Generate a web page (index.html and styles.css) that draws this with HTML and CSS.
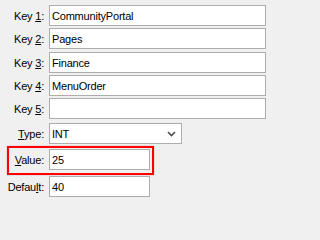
FILE: index.html
```html
<!DOCTYPE html>
<html>
<head>
<meta charset="utf-8">
<link rel="stylesheet" href="styles.css">
</head>
<body>
<div class="form">
  <div class="row r1"><span class="lbl">Key <u>1</u>:</span><div class="field wide">CommunityPortal</div></div>
  <div class="row r2"><span class="lbl">Key <u>2</u>:</span><div class="field wide">Pages</div></div>
  <div class="row r3"><span class="lbl">Key <u>3</u>:</span><div class="field wide">Finance</div></div>
  <div class="row r4"><span class="lbl">Key <u>4</u>:</span><div class="field wide">MenuOrder</div></div>
  <div class="row r5"><span class="lbl">Key <u>5</u>:</span><div class="field wide"></div></div>
  <div class="row typ"><span class="lbl"><u>T</u>ype:</span><div class="field select"><span>INT</span><svg class="chev" width="9" height="6" viewBox="0 0 9 6"><path d="M1 1 L4.5 4.5 L8 1" fill="none" stroke="#4d4d4d" stroke-width="1.6"/></svg></div></div>
  <div class="row val"><span class="lbl"><u>V</u>alue:</span><div class="field short">25</div></div>
  <div class="row def"><span class="lbl">Defau<u>l</u>t:</span><div class="field short">40</div></div>
</div>
</body>
</html>
```
FILE: styles.css
```css
body {
  margin: 0;
  background: #f0f0f0;
  font-family: "Liberation Sans", Arial, sans-serif;
  font-size: 11px;
  letter-spacing: -0.2px;
  color: #000;
}
.form {
  display: flex;
  flex-direction: column;
  padding-top: 5px;
}
.row {
  display: flex;
  align-items: center;
  height: 21px;
  position: relative;
}
.lbl {
  width: 44px;
  margin-right: 5px;
  text-align: right;
  white-space: nowrap;
}
.field {
  box-sizing: border-box;
  height: 21px;
  border: 1px solid #adadad;
  background: #fff;
  padding: 0 2px;
  display: flex;
  align-items: center;
  white-space: nowrap;
}
.wide { width: 217px; }
.short { width: 101px; }
.select {
  width: 133px;
  justify-content: space-between;
  padding-right: 5px;
}
.r2 { margin-top: 2px; }
.r3 { margin-top: 3px; }
.r4 { margin-top: 2px; }
.r5 { margin-top: 2px; }
.typ { margin-top: 4px; }
.val { margin-top: 5px; }
.def { margin-top: 6px; }
.val::after {
  content: "";
  position: absolute;
  left: 7px;
  top: -3px;
  width: 147px;
  height: 29px;
  box-sizing: border-box;
  border: 2px solid #f00;
  box-shadow: 0 0 1px rgba(255, 0, 0, 0.5);
}
```
